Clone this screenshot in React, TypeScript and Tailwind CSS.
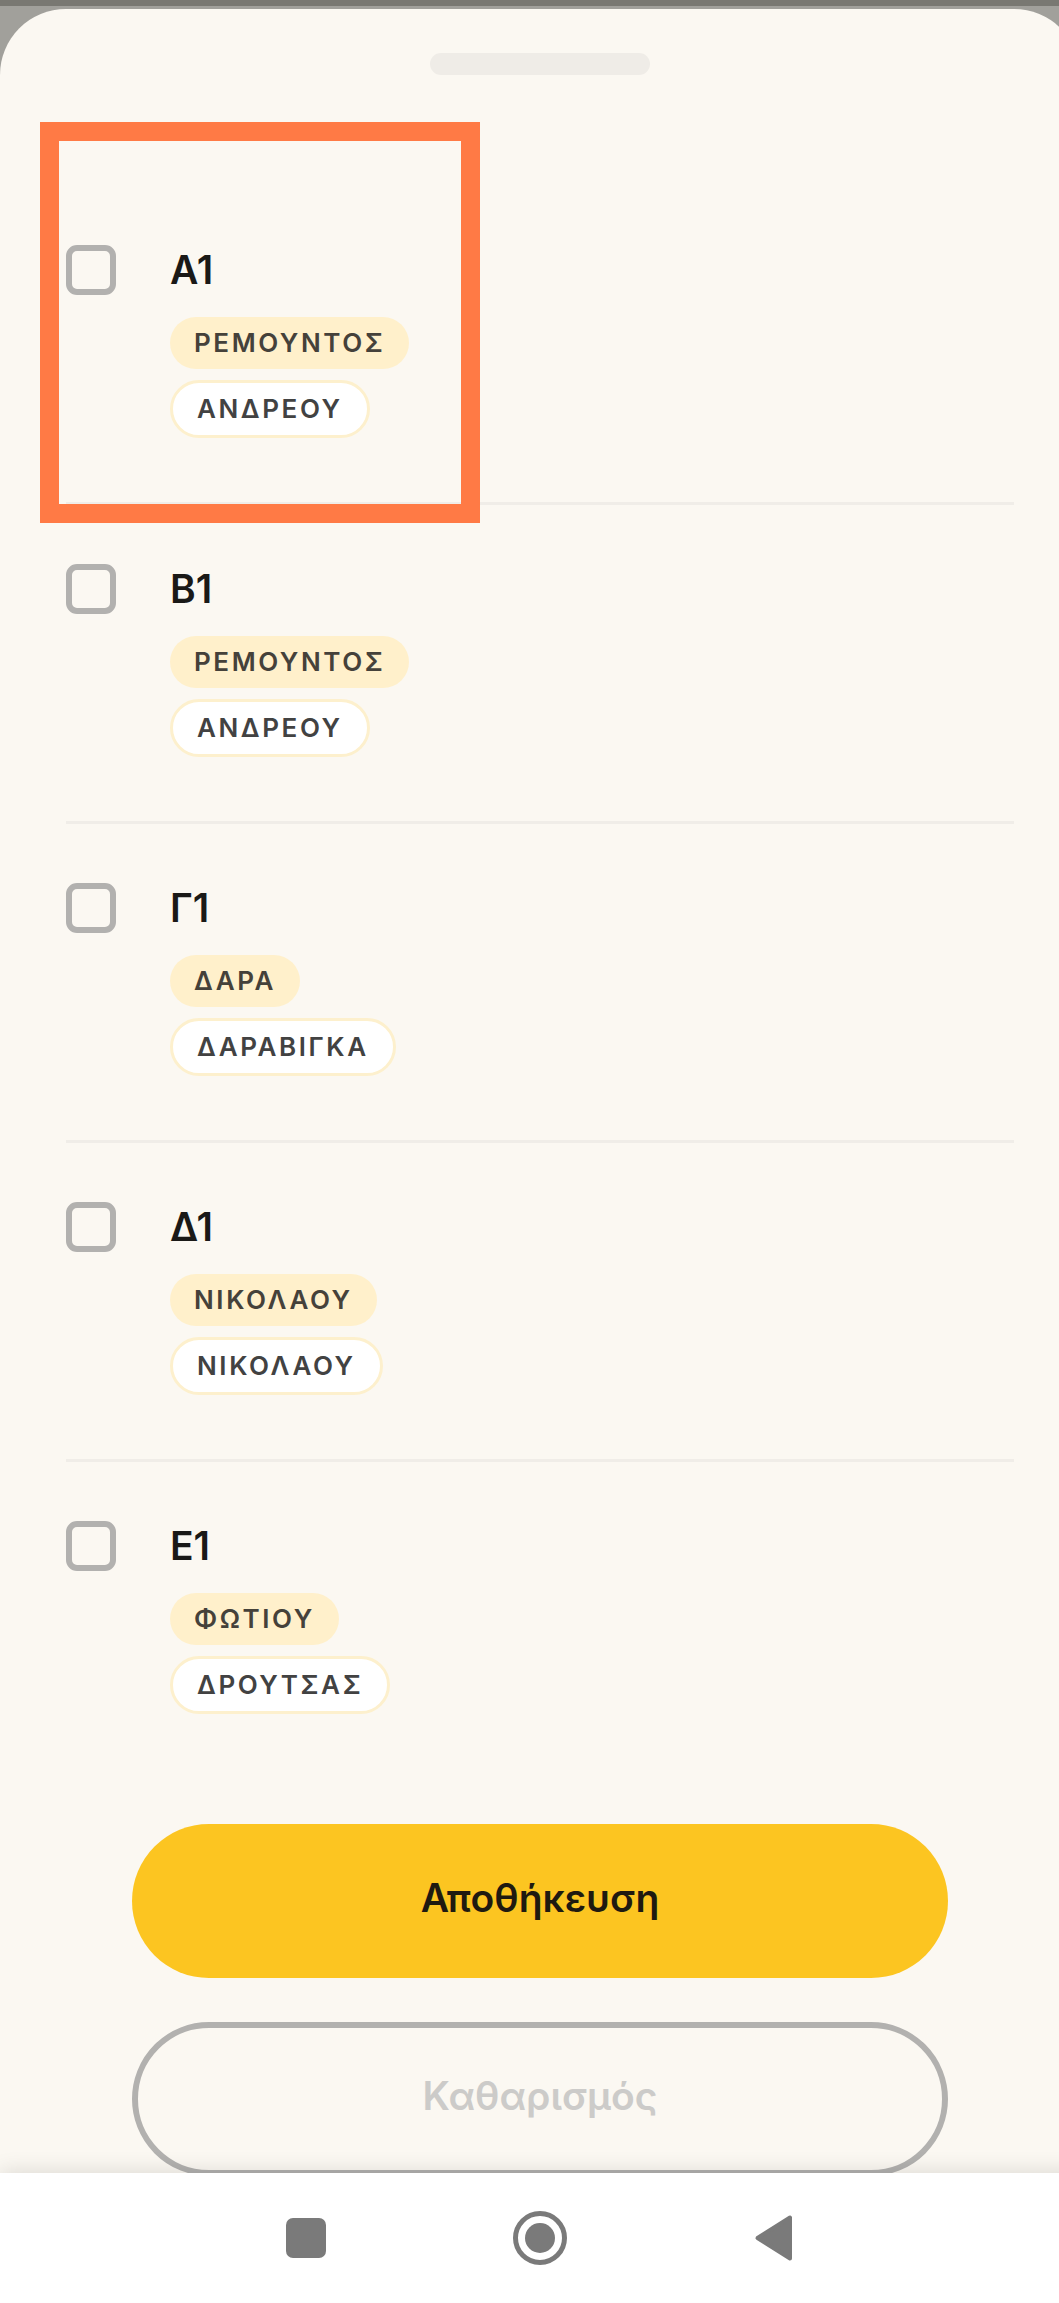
import { useState } from "react";

type District = {
  id: string;
  code: string;
  from: string;
  to: string;
};

const districts: District[] = [
  { id: "a1", code: "Α1", from: "ΡΕΜΟΥΝΤΟΣ", to: "ΑΝΔΡΕΟΥ" },
  { id: "b1", code: "Β1", from: "ΡΕΜΟΥΝΤΟΣ", to: "ΑΝΔΡΕΟΥ" },
  { id: "g1", code: "Γ1", from: "ΔΑΡΑ", to: "ΔΑΡΑΒΙΓΚΑ" },
  { id: "d1", code: "Δ1", from: "ΝΙΚΟΛΑΟΥ", to: "ΝΙΚΟΛΑΟΥ" },
  { id: "e1", code: "Ε1", from: "ΦΩΤΙΟΥ", to: "ΔΡΟΥΤΣΑΣ" },
];

function Row({
  item,
  checked,
  highlighted,
  onToggle,
}: {
  item: District;
  checked: boolean;
  highlighted: boolean;
  onToggle: () => void;
}) {
  return (
    <li className="relative flex items-start gap-[54px] border-b-3 border-[#f0ede8] pt-[59px] pb-16 last:border-b-0">
      <input
        id={item.id}
        type="checkbox"
        checked={checked}
        onChange={onToggle}
        className="size-[50px] shrink-0 appearance-none rounded-[11px] border-[6px] border-[#b2b1af] checked:bg-[#fcc521]"
      />

      <label htmlFor={item.id} className="flex flex-col items-start">
        <span className="mb-[22px] text-[39px] leading-[50px] font-semibold text-[#1a1917]">
          {item.code}
        </span>
        <span className="mb-[11px] rounded-full bg-[#fff0cb] px-6 text-[26px] leading-[52px] font-semibold tracking-widest text-[#45413a]">
          {item.from}
        </span>
        <span className="rounded-full border-3 border-[#fdf0cd] bg-white px-6 text-[26px] leading-[52px] font-semibold tracking-widest text-[#424242]">
          {item.to}
        </span>
      </label>

      {/* Highlight frame */}
      {highlighted && (
        <div className="pointer-events-none absolute -top-16 -left-[26px] h-[401px] w-[440px] border-[19px] border-[#ff7a45]" />
      )}
    </li>
  );
}

function NavBar() {
  return (
    <nav className="relative flex h-[130px] shrink-0 items-center justify-center gap-[180px] bg-white shadow-[0_-2px_20px_rgba(0,0,0,0.12)]">
      <button type="button" aria-label="Πρόσφατα" className="size-[54px]">
        <svg viewBox="0 0 54 54" className="size-full" fill="#7a7a7a">
          <rect x="7" y="7" width="40" height="40" rx="7" />
        </svg>
      </button>
      <button type="button" aria-label="Αρχική" className="size-[54px]">
        <svg viewBox="0 0 54 54" className="size-full" fill="#7a7a7a">
          <circle cx="27" cy="27" r="24.5" fill="none" stroke="#7a7a7a" strokeWidth="5" />
          <circle cx="27" cy="27" r="15" />
        </svg>
      </button>
      <button type="button" aria-label="Πίσω" className="size-[54px]">
        <svg viewBox="0 0 54 54" className="size-full" fill="#7a7a7a">
          <path
            d="M10.500 27 43 6.500V47.500Z"
            stroke="#7a7a7a"
            strokeWidth="4"
            strokeLinejoin="round"
          />
        </svg>
      </button>
    </nav>
  );
}

export default function App() {
  const [selected, setSelected] = useState<string[]>([]);

  const toggle = (id: string) => {
    setSelected((prev) =>
      prev.includes(id) ? prev.filter((x) => x !== id) : [...prev, id]
    );
  };

  return (
    <div className="h-screen overflow-hidden bg-[#a1a09b] font-['Inter','Noto_Sans',sans-serif]">
      {/* The sheet runs a little past the right edge */}
      <div className="-mr-[21px] flex h-full flex-col">
        <div className="h-1.5 shrink-0 bg-[#797872]" />

        <main className="mt-[3px] min-h-0 flex-1 overflow-y-auto rounded-t-[66px] bg-[#fbf8f2] [scrollbar-width:none]">
          <div className="mx-auto mt-11 h-[22px] w-[220px] rounded-full bg-[#efece7]" />

          <ul className="mx-[66px] mt-[111px]">
            {districts.map((item, i) => (
              <Row
                key={item.id}
                item={item}
                checked={selected.includes(item.id)}
                highlighted={i === 0}
                onToggle={() => toggle(item.id)}
              />
            ))}
          </ul>

          <div className="mx-[132px] mt-[46px] flex flex-col gap-11 pb-11">
            <button
              type="button"
              className="h-[154px] rounded-full bg-[#fcc521] pb-1.5 text-[39px] font-semibold text-[#1f1a10]"
            >
              Αποθήκευση
            </button>
            <button
              type="button"
              disabled={selected.length === 0}
              onClick={() => setSelected([])}
              className="h-[154px] rounded-full border-[6px] border-[#b2b1af] pb-1.5 text-[39px] font-semibold text-[#1f1a10] disabled:text-[#cccbc9]"
            >
              Καθαρισμός
            </button>
          </div>
        </main>

        <NavBar />
      </div>
    </div>
  );
}
